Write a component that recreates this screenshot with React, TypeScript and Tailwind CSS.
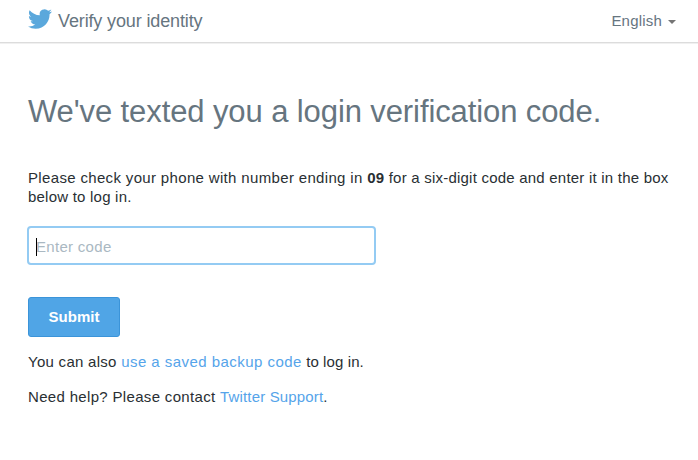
import { useState } from 'react';

const TwitterBird = () => (
  <svg className="w-6 h-6 text-[#5ba8dc]" viewBox="0 0 24 24" fill="currentColor" aria-hidden="true">
    <path d="M23.953 4.57a10 10 0 01-2.825.775 4.958 4.958 0 002.163-2.723c-.951.555-2.005.959-3.127 1.184a4.92 4.92 0 00-8.384 4.482C7.69 8.095 4.067 6.13 1.64 3.162a4.822 4.822 0 00-.666 2.475c0 1.71.87 3.213 2.188 4.096a4.904 4.904 0 01-2.228-.616v.06a4.923 4.923 0 003.946 4.827 4.996 4.996 0 01-2.212.085 4.936 4.936 0 004.604 3.417 9.867 9.867 0 01-6.102 2.105c-.39 0-.779-.023-1.17-.067a13.995 13.995 0 007.557 2.209c9.053 0 13.998-7.496 13.998-13.985 0-.21 0-.42-.015-.63A9.935 9.935 0 0024 4.59z" />
  </svg>
);

const Header = () => (
  <header className="flex h-[43px] justify-between border-b border-[#dcdcdc] pl-7 pr-[22px] text-[#66757f] shadow-[0_1px_0_rgba(0,0,0,0.06)]">
    <div className="flex items-start gap-1.5 pt-[7px]">
      <TwitterBird />
      <span className="pt-px text-lg leading-[26px] tracking-[-0.13px]">Verify your identity</span>
    </div>
    <button className="flex items-center gap-1.5 text-[15px] tracking-[0.2px]">
      English
      <span className="mt-0.5 border-x-4 border-t-4 border-x-transparent border-t-[#757575]"></span>
    </button>
  </header>
);

const App = () => {
  const [code, setCode] = useState('');

  return (
    <div className="min-h-screen bg-white font-['Liberation_Sans',Arial,sans-serif] text-[#292f33]">
      <Header />
      <main className="px-7 pt-[49px]">
        <h1 className="text-[31px] leading-10 tracking-[-0.1px] text-[#66757f] whitespace-nowrap">
          We've texted you a login verification code.
        </h1>
        <p className="mt-9 w-[650px] text-[15px] leading-[19px] tracking-[0.22px]">
          <span className="tracking-[0.34px]">Please check your phone with number ending in </span>
          <strong>09</strong> for a six-digit code and enter it in the box below to log in.
        </p>

        <form onSubmit={(e) => e.preventDefault()}>
          <div className="relative -ml-px mt-5 w-[349px]">
            <input
              type="text"
              value={code}
              onChange={(e) => setCode(e.target.value)}
              placeholder="Enter code"
              className="block h-[39px] w-full rounded border-2 border-[#94cbf3] px-[7px] pt-0.5 text-[15px] tracking-[0.3px] outline-none placeholder:text-[#aab8c2]"
            />
            {code === '' && <span className="absolute left-[9px] top-3 h-[18px] w-px bg-black"></span>}
          </div>
          <button
            type="submit"
            className="mt-8 block h-10 w-[92px] rounded-[3px] border border-[#3b94d9] bg-[#50a5e6] text-[15px] font-bold text-white"
          >
            Submit
          </button>
        </form>

        <p className="mt-[15px] text-[15px] leading-[19px] tracking-[0.1px]">
          <span className="tracking-[0.28px]">You can also </span>
          <a href="#" className="tracking-[0.46px] text-[#55a4ea]">use a saved backup code</a> to log in.
        </p>
        <p className="mt-4 text-[15px] leading-[19px] tracking-[0.33px]">
          Need help? Please contact <a href="#" className="tracking-[0.16px] text-[#55a4ea]">Twitter Support</a>.
        </p>
      </main>
    </div>
  );
};

export default App;
